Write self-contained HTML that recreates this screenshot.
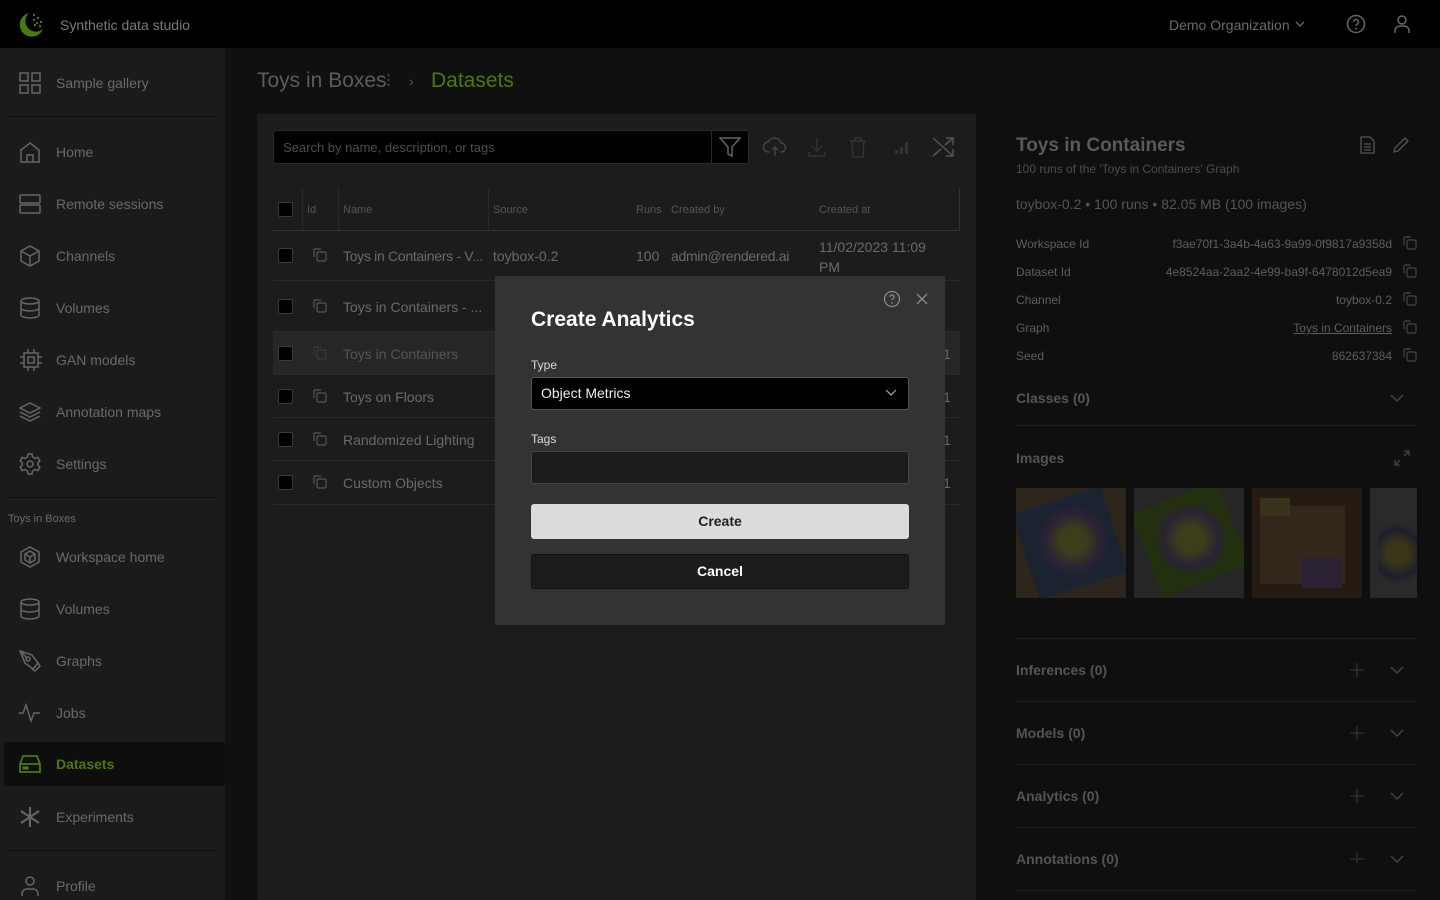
<!DOCTYPE html>
<html><head><meta charset="utf-8"><style>
*{margin:0;padding:0;box-sizing:border-box}
html,body{width:1440px;height:900px;overflow:hidden}
body{background:#101010;font-family:"Liberation Sans",sans-serif;color:#6e6e6e;position:relative}
.a{position:absolute}
svg{display:block}
.top{left:0;top:0;width:1440px;height:48px;background:#000}
.side{left:0;top:48px;width:225px;height:852px;background:#1b1b1b}
.nav{position:absolute;left:0;width:225px;height:44px;display:flex;align-items:center;font-size:14px;color:#6a6a6a}
.nav svg{position:absolute;left:19px}
.nav span{position:absolute;left:56px}
.hr{position:absolute;left:8px;width:209px;height:1px;background:#0d0d0d}
.panel{left:257px;top:114px;width:719px;height:786px;background:#1c1c1c}
.cb{position:absolute;width:15px;height:15px;background:#000;border:1px solid #3a3a3a;border-radius:2px}
.row{position:absolute;left:16px;width:687px;border-bottom:1px solid #2a2a2a;font-size:14px;color:#6a6a6a}
.rp{left:976px;top:114px;width:464px;height:786px;background:#0f0f0f}
.kv{position:absolute;left:40px;width:400px;font-size:12px;color:#5e5e5e}
.kv b{font-weight:normal;position:absolute;right:24px;top:0}
.sec{position:absolute;left:40px;width:400px;border-top:1px solid #1f1f1f}
.ttl{position:absolute;left:40px;font-size:14px;font-weight:bold;color:#555}
.modal{left:495px;top:276px;width:450px;height:349px;background:#333}
.img{position:absolute;top:374px;height:110px;overflow:hidden}
</style></head><body>
<svg width="0" height="0" style="position:absolute"><defs><g id="cp" fill="none" stroke-width="1.2"><path d="M2 10V3a1 1 0 0 1 1-1h6"/><rect x="5" y="5" width="9" height="9" rx="1.5"/></g></defs></svg>
<div class="a top">
 <svg class="a" style="left:16px;top:10px" width="30" height="30" viewBox="0 0 30 30"><path d="M13 3 A12 12 0 1 0 27 19 A9 9 0 0 1 13 3Z" fill="#4a7a0c"/><g fill="#4a7a0c"><rect x="17" y="4" width="2" height="2"/><rect x="21" y="7" width="2" height="2"/><rect x="17" y="9" width="2" height="2"/><rect x="24" y="11" width="2" height="2"/><rect x="20" y="12" width="2" height="2"/><rect x="23" y="15" width="2" height="2"/><rect x="18" y="14" width="2" height="2"/></g></svg>
 <div class="a" style="left:60px;top:17px;font-size:14px;color:#7a7a7a">Synthetic data studio</div>
 <div class="a" style="left:1169px;top:17px;font-size:14px;color:#6a6a6a">Demo Organization</div>
 <svg class="a" style="left:1295px;top:20px" width="10" height="8"><path d="M1 2l4 4 4-4" stroke="#666" fill="none" stroke-width="1.3"/></svg>
 <svg class="a" style="left:1346px;top:14px" width="20" height="20"><circle cx="10" cy="10" r="8.5" stroke="#666" fill="none" stroke-width="1.5"/><path d="M7.5 8a2.5 2.5 0 1 1 3.5 2.3c-.8.4-1 .9-1 1.7" stroke="#666" fill="none" stroke-width="1.5"/><circle cx="10" cy="14.5" r="1" fill="#666"/></svg>
 <svg class="a" style="left:1393px;top:14px" width="18" height="20"><circle cx="9" cy="6" r="4" stroke="#666" fill="none" stroke-width="1.5"/><path d="M2 19v-2a5 5 0 0 1 5-5h4a5 5 0 0 1 5 5v2" stroke="#666" fill="none" stroke-width="1.5"/></svg>
</div>
<div class="a side">
 <div class="nav" style="top:13px"><svg width="22" height="22" viewBox="0 0 22 22" fill="none" stroke="#666" stroke-width="1.5"><rect x="1" y="1" width="8" height="8"/><rect x="13" y="1" width="8" height="8"/><rect x="1" y="13" width="8" height="8"/><rect x="13" y="13" width="8" height="8"/></svg><span>Sample gallery</span></div>
 <div class="hr" style="top:68px"></div>
 <div class="nav" style="top:82px"><svg width="22" height="22" viewBox="0 0 22 22" fill="none" stroke="#666" stroke-width="1.5"><path d="M2 21V9l9-7 9 7v12zM8 21v-7h6v7"/></svg><span>Home</span></div>
 <div class="nav" style="top:134px"><svg width="22" height="22" viewBox="0 0 22 22" fill="none" stroke="#666" stroke-width="1.5"><rect x="1" y="2" width="20" height="8" rx="1"/><rect x="1" y="12" width="20" height="8" rx="1"/></svg><span>Remote sessions</span></div>
 <div class="nav" style="top:186px"><svg width="22" height="22" viewBox="0 0 22 22" fill="none" stroke="#666" stroke-width="1.5"><path d="M11 1l9 5v10l-9 5-9-5V6zM2 6l9 5 9-5M11 11v10"/></svg><span>Channels</span></div>
 <div class="nav" style="top:238px"><svg width="22" height="22" viewBox="0 0 22 22" fill="none" stroke="#666" stroke-width="1.5"><ellipse cx="11" cy="4" rx="9" ry="3"/><path d="M2 4v14c0 1.7 4 3 9 3s9-1.3 9-3V4M2 11c0 1.7 4 3 9 3s9-1.3 9-3"/></svg><span>Volumes</span></div>
 <div class="nav" style="top:290px"><svg width="24" height="24" viewBox="0 0 24 24" fill="none" stroke="#666" stroke-width="1.5"><rect x="5" y="5" width="14" height="14"/><rect x="9" y="9" width="6" height="6"/><path d="M9 1v4M15 1v4M9 19v4M15 19v4M1 9h4M1 15h4M19 9h4M19 15h4"/></svg><span>GAN models</span></div>
 <div class="nav" style="top:342px"><svg width="22" height="22" viewBox="0 0 22 22" fill="none" stroke="#666" stroke-width="1.5"><path d="M11 2l10 5-10 5L1 7zM1 11l10 5 10-5M1 15l10 5 10-5"/></svg><span>Annotation maps</span></div>
 <div class="nav" style="top:394px"><svg width="22" height="22" viewBox="0 0 22 22" fill="none" stroke="#666" stroke-width="1.5"><circle cx="11" cy="11" r="3"/><path d="M9 1h4l.6 3 2.5 1.4 2.8-1 2 3.4-2.2 2v2.4l2.2 2-2 3.4-2.8-1L13.6 18 13 21H9l-.6-3-2.5-1.4-2.8 1-2-3.4 2.2-2V9.8L1.1 7.8l2-3.4 2.8 1L8.4 4z"/></svg><span>Settings</span></div>
 <div class="hr" style="top:449px"></div>
 <div class="a" style="left:8px;top:465px;font-size:11px;color:#6a6a6a">Toys in Boxes</div>
 <div class="nav" style="top:487px"><svg width="22" height="22" viewBox="0 0 22 22" fill="none" stroke="#666" stroke-width="1.5"><path d="M11 1l9 5v10l-9 5-9-5V6z"/><path d="M11 5l5 3v6l-5 3-5-3V8zM6 8l5 3 5-3M11 11v6"/></svg><span>Workspace home</span></div>
 <div class="nav" style="top:539px"><svg width="22" height="22" viewBox="0 0 22 22" fill="none" stroke="#666" stroke-width="1.5"><ellipse cx="11" cy="4" rx="9" ry="3"/><path d="M2 4v14c0 1.7 4 3 9 3s9-1.3 9-3V4M2 11c0 1.7 4 3 9 3s9-1.3 9-3"/></svg><span>Volumes</span></div>
 <div class="nav" style="top:591px"><svg width="22" height="22" viewBox="0 0 22 22" fill="none" stroke="#666" stroke-width="1.5"><path d="M1 1l12 4 6 8-5 6-8-6zM1 1l7 7"/><circle cx="9" cy="9" r="2"/><path d="M13 19l3 2 5-5-2-3"/></svg><span>Graphs</span></div>
 <div class="nav" style="top:643px"><svg width="22" height="22" viewBox="0 0 22 22" fill="none" stroke="#666" stroke-width="1.5"><path d="M0 11h4l3-8 5 16 3-8h6"/></svg><span>Jobs</span></div>
 <div class="a" style="left:4px;top:694px;width:221px;height:44px;background:#0e0e0e;border-radius:3px"></div>
 <div class="nav" style="top:694px;color:#4a7a0c;font-weight:bold"><svg width="22" height="20" viewBox="0 0 22 20" fill="none" stroke="#4a7a0c" stroke-width="1.8"><path d="M1 10l3-8h14l3 8v8H1zM1 10h20"/><circle cx="5" cy="14" r=".8" fill="#4a7a0c"/><circle cx="8" cy="14" r=".8" fill="#4a7a0c"/></svg><span>Datasets</span></div>
 <div class="nav" style="top:747px"><svg width="22" height="22" viewBox="0 0 22 22" fill="none" stroke="#666" stroke-width="2"><path d="M11 1v20M2 5l18 12M20 5L2 17"/></svg><span>Experiments</span></div>
 <div class="hr" style="top:802px"></div>
 <div class="nav" style="top:816px"><svg width="22" height="22" viewBox="0 0 22 22" fill="none" stroke="#666" stroke-width="1.5"><circle cx="11" cy="6" r="4"/><path d="M3 21v-2a5 5 0 0 1 5-5h6a5 5 0 0 1 5 5v2"/></svg><span>Profile</span></div>
</div>
<div class="a" style="left:257px;top:69px;font-size:21px;color:#5c5c5c">Toys in Boxes</div>
<svg class="a" style="left:387px;top:73px" width="3" height="14" fill="#555"><circle cx="1.5" cy="2" r="1"/><circle cx="1.5" cy="7" r="1"/><circle cx="1.5" cy="12" r="1"/></svg>
<div class="a" style="left:409px;top:73px;font-size:14px;color:#555">›</div>
<div class="a" style="left:431px;top:69px;font-size:21px;color:#4a7a0c">Datasets</div>

<div class="a panel">
 <div class="a" style="left:16px;top:16px;width:476px;height:34px;background:#000;border:1px solid #2a2a2a;border-radius:3px;font-size:13px;color:#4e4e4e;padding:9px 9px">Search by name, description, or tags</div>
 <svg class="a" style="left:462px;top:22px" width="22" height="22" viewBox="0 0 22 22" fill="none" stroke="#666" stroke-width="1.5"><path d="M1 2h20l-8 9v9l-4-2v-7z"/></svg>
 <div class="a" style="left:454px;top:16px;width:1px;height:34px;background:#2a2a2a"></div>
 <svg class="a" style="left:506px;top:22px" width="24" height="22" viewBox="0 0 24 22" fill="none" stroke="#444" stroke-width="1.5"><path d="M7 16H6a5 5 0 0 1-1-10 7 7 0 0 1 13 1 4 4 0 0 1 0 9h-1M12 20v-9M9 14l3-3 3 3"/></svg>
 <svg class="a" style="left:550px;top:22px" width="20" height="22" viewBox="0 0 20 22" fill="none" stroke="#333" stroke-width="1.5"><path d="M10 2v13M5 10l5 5 5-5M2 16v4h16v-4"/></svg>
 <svg class="a" style="left:592px;top:22px" width="18" height="22" viewBox="0 0 18 22" fill="none" stroke="#333" stroke-width="1.5"><path d="M1 5h16M6 5V2h6v3M3 5l1 16h10l1-16"/></svg>
 <svg class="a" style="left:636px;top:24px" width="16" height="18" fill="#333"><rect x="2" y="12" width="3" height="4"/><rect x="7" y="9" width="3" height="7"/><rect x="12" y="4" width="3" height="12"/></svg>
 <svg class="a" style="left:675px;top:22px" width="22" height="22" viewBox="0 0 22 22" fill="none" stroke="#555" stroke-width="1.5"><path d="M1 2l20 18M14 20h7v-7M1 20l8-7M13 9l8-7M14 2h7v7"/></svg>
 <div class="a" style="left:16px;top:74px;width:687px;height:43px;border-bottom:1px solid #333;border-right:1px solid #333;font-size:11px;color:#555">
  <div class="cb" style="left:5px;top:14px"></div>
  <div class="a" style="left:29px;top:0;width:1px;height:42px;background:#2a2a2a"></div>
  <div class="a" style="left:65px;top:0;width:1px;height:42px;background:#2a2a2a"></div>
  <div class="a" style="left:215px;top:0;width:1px;height:42px;background:#2a2a2a"></div>
  <span class="a" style="left:34px;top:16px">Id</span><span class="a" style="left:70px;top:16px">Name</span><span class="a" style="left:220px;top:16px">Source</span><span class="a" style="left:363px;top:16px">Runs</span><span class="a" style="left:398px;top:16px">Created by</span><span class="a" style="left:546px;top:16px">Created at</span>
 </div>
 <div class="row" style="top:117px;height:50px"><div class="cb" style="left:5px;top:17px"></div><svg class="a" style="left:39px;top:16px" width="16" height="16" stroke="#555"><use href="#cp"/></svg><span class="a" style="left:70px;top:17px;letter-spacing:-.3px">Toys in Containers - V...</span><span class="a" style="left:220px;top:17px">toybox-0.2</span><span class="a" style="left:363px;top:17px">100</span><span class="a" style="left:398px;top:17px;letter-spacing:-.3px">admin@rendered.ai</span><span class="a" style="left:546px;top:6px;line-height:20px">11/02/2023 11:09<br>PM</span></div>
 <div class="row" style="top:167px;height:51px"><div class="cb" style="left:5px;top:18px"></div><svg class="a" style="left:39px;top:17px" width="16" height="16" stroke="#555"><use href="#cp"/></svg><span class="a" style="left:70px;top:18px">Toys in Containers - ...</span></div>
 <div class="row" style="top:218px;height:43px;background:#262626"><div class="cb" style="left:5px;top:14px"></div><svg class="a" style="left:39px;top:13px" width="16" height="16" stroke="#3a3a3a"><use href="#cp"/></svg><span class="a" style="left:70px;top:14px;color:#555">Toys in Containers</span><span class="a" style="left:670px;top:14px">1</span></div>
 <div class="row" style="top:261px;height:43px"><div class="cb" style="left:5px;top:14px"></div><svg class="a" style="left:39px;top:13px" width="16" height="16" stroke="#555"><use href="#cp"/></svg><span class="a" style="left:70px;top:14px">Toys on Floors</span><span class="a" style="left:670px;top:14px">1</span></div>
 <div class="row" style="top:304px;height:43px"><div class="cb" style="left:5px;top:14px"></div><svg class="a" style="left:39px;top:13px" width="16" height="16" stroke="#555"><use href="#cp"/></svg><span class="a" style="left:70px;top:14px">Randomized Lighting</span><span class="a" style="left:670px;top:14px">1</span></div>
 <div class="row" style="top:347px;height:44px"><div class="cb" style="left:5px;top:14px"></div><svg class="a" style="left:39px;top:13px" width="16" height="16" stroke="#555"><use href="#cp"/></svg><span class="a" style="left:70px;top:14px">Custom Objects</span><span class="a" style="left:670px;top:14px">1</span></div>
</div>

<div class="a rp">
 <div class="a" style="left:40px;top:21px;font-size:19px;font-weight:bold;color:#5a5a5a">Toys in Containers</div>
 <div class="a" style="left:40px;top:48px;font-size:12px;color:#4e4e4e">100 runs of the 'Toys in Containers' Graph</div>
 <svg class="a" style="left:384px;top:22px" width="15" height="18" fill="none" stroke="#555" stroke-width="1.3"><path d="M1 1h9l4 4v12H1zM4 8h7M4 11h7M4 14h7"/></svg>
 <svg class="a" style="left:416px;top:22px" width="18" height="18" fill="none" stroke="#555" stroke-width="1.3"><path d="M2 16l1-4L13 2l3 3L6 15z"/></svg>
 <div class="a" style="left:40px;top:82px;font-size:14px;color:#555">toybox-0.2 • 100 runs • 82.05 MB (100 images)</div>
 <div class="kv" style="top:123px">Workspace Id<b>f3ae70f1-3a4b-4a63-9a99-0f9817a9358d</b></div>
 <div class="kv" style="top:151px">Dataset Id<b>4e8524aa-2aa2-4e99-ba9f-6478012d5ea9</b></div>
 <div class="kv" style="top:179px">Channel<b>toybox-0.2</b></div>
 <div class="kv" style="top:207px">Graph<b style="text-decoration:underline">Toys in Containers</b></div>
 <div class="kv" style="top:235px">Seed<b>862637384</b></div>
 <svg class="a" style="left:426px;top:121px" width="16" height="16" stroke="#444"><use href="#cp"/></svg>
 <svg class="a" style="left:426px;top:149px" width="16" height="16" stroke="#444"><use href="#cp"/></svg>
 <svg class="a" style="left:426px;top:177px" width="16" height="16" stroke="#444"><use href="#cp"/></svg>
 <svg class="a" style="left:426px;top:205px" width="16" height="16" stroke="#444"><use href="#cp"/></svg>
 <svg class="a" style="left:426px;top:233px" width="16" height="16" stroke="#444"><use href="#cp"/></svg>
 <div class="ttl" style="top:276px">Classes (0)</div>
 <svg class="a" style="left:414px;top:280px" width="14" height="8"><path d="M1 1l6 6 6-6" stroke="#444" fill="none" stroke-width="1.5"/></svg>
 <div class="sec" style="top:311px;height:1px"></div>
 <div class="ttl" style="top:336px">Images</div>
 <svg class="a" style="left:418px;top:336px" width="16" height="16" fill="none" stroke="#444" stroke-width="1.3"><path d="M1 15l5-5M1 10v5h5M15 1l-5 5M10 1h5v5"/></svg>
 <div class="img" style="left:40px;width:110px;background:#2e261c"><div class="a" style="left:8px;top:10px;width:92px;height:90px;background:#1b2230;transform:rotate(-18deg)"></div><div class="a" style="left:22px;top:18px;width:70px;height:70px;background:radial-gradient(circle,#3e3d1a 25%,#2a2235 55%,rgba(27,34,48,0) 75%)"></div></div>
 <div class="img" style="left:158px;width:110px;background:#262626"><div class="a" style="left:10px;top:6px;width:92px;height:90px;background:#22300f;transform:rotate(-22deg)"></div><div class="a" style="left:22px;top:16px;width:70px;height:70px;background:radial-gradient(circle,#3e3d1a 25%,#2a2235 55%,rgba(34,48,15,0) 75%)"></div></div>
 <div class="img" style="left:276px;width:110px;background:#251b12"><div class="a" style="left:8px;top:18px;width:85px;height:78px;background:#33261a"></div><div class="a" style="left:8px;top:10px;width:30px;height:18px;background:#38331a"></div><div class="a" style="left:50px;top:70px;width:40px;height:30px;background:#2a2232"></div></div>
 <div class="img" style="left:394px;width:47px;background:#2a2a2a"><div class="a" style="left:8px;top:35px;width:39px;height:60px;background:radial-gradient(circle,#3a3618 30%,#1e1e2e 65%,#2a2a2a 85%)"></div></div>
 <div class="sec" style="top:524px;height:1px"></div>
 <div class="sec" style="top:587px;height:1px"></div>
 <div class="sec" style="top:650px;height:1px"></div>
 <div class="sec" style="top:713px;height:1px"></div>
 <div class="sec" style="top:776px;height:1px"></div>
 <div class="ttl" style="top:548px">Inferences (0)</div>
 <div class="ttl" style="top:611px">Models (0)</div>
 <div class="ttl" style="top:674px">Analytics (0)</div>
 <div class="ttl" style="top:737px">Annotations (0)</div>
 <svg class="a" style="left:374px;top:549px" width="14" height="200" stroke="#333" stroke-width="1.3"><path d="M7 0v14M0 7h14M7 63v14M0 70h14M7 126v14M0 133h14M7 189v14M0 196h14"/></svg>
 <svg class="a" style="left:414px;top:552px" width="14" height="200"><g stroke="#444" fill="none" stroke-width="1.5"><path d="M1 1l6 6 6-6"/><path d="M1 64l6 6 6-6"/><path d="M1 127l6 6 6-6"/><path d="M1 190l6 6 6-6"/></g></svg>
</div>

<div class="a modal">
 <svg class="a" style="left:388px;top:14px" width="18" height="18"><circle cx="9" cy="9" r="7.5" stroke="#888" fill="none" stroke-width="1.3"/><path d="M7 7a2 2 0 1 1 2.8 1.8c-.6.3-.8.7-.8 1.4" stroke="#888" fill="none" stroke-width="1.3"/><circle cx="9" cy="13" r=".9" fill="#888"/></svg>
 <svg class="a" style="left:421px;top:17px" width="12" height="12"><path d="M1 1l10 10M11 1L1 11" stroke="#888" stroke-width="1.4"/></svg>
 <div class="a" style="left:36px;top:32px;font-size:21px;font-weight:bold;color:#fff">Create Analytics</div>
 <div class="a" style="left:36px;top:82px;font-size:12px;color:#ddd">Type</div>
 <div class="a" style="left:36px;top:101px;width:378px;height:33px;background:#000;border:1px solid #555;border-radius:3px;font-size:14px;color:#eee;padding:7px 9px">Object Metrics</div>
 <svg class="a" style="left:390px;top:113px" width="12" height="8"><path d="M1 1l5 5 5-5" stroke="#aaa" fill="none" stroke-width="1.2"/></svg>
 <div class="a" style="left:36px;top:156px;font-size:12px;color:#ddd">Tags</div>
 <div class="a" style="left:36px;top:175px;width:378px;height:33px;background:#1c1c1c;border:1px solid #444;border-radius:3px"></div>
 <div class="a" style="left:36px;top:228px;width:378px;height:35px;background:#dcdcdc;border-radius:3px;font-size:14px;font-weight:bold;color:#222;text-align:center;line-height:35px">Create</div>
 <div class="a" style="left:36px;top:278px;width:378px;height:35px;background:#1c1c1c;border:1px solid #111;border-radius:3px;font-size:14px;font-weight:bold;color:#fff;text-align:center;line-height:33px">Cancel</div>
</div>
</body></html>
